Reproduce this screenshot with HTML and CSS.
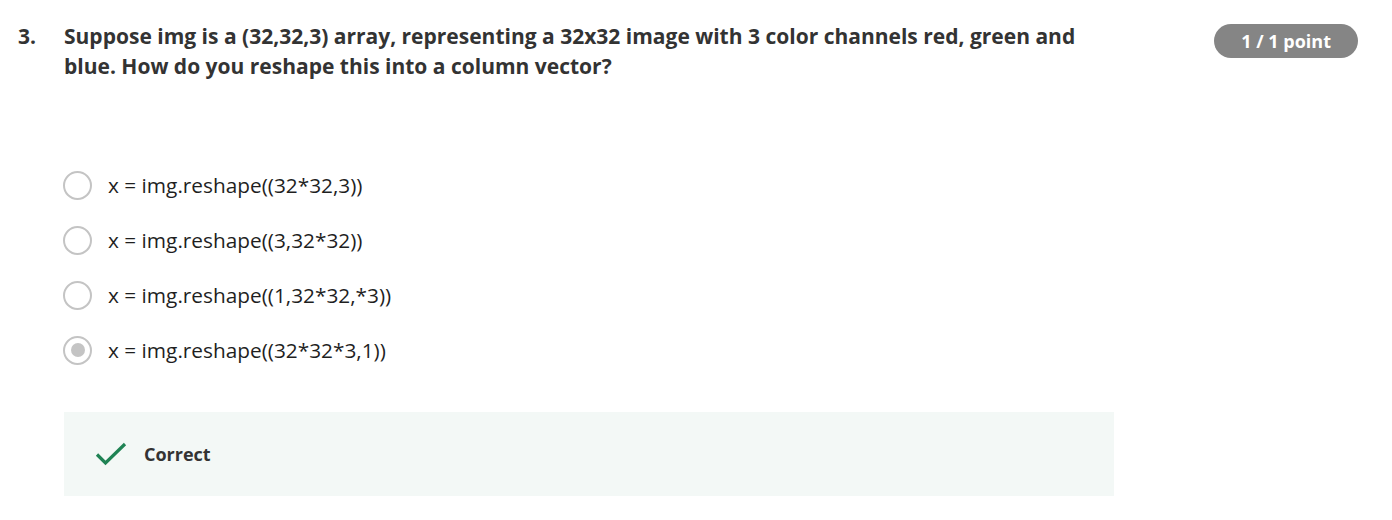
FILE: index.html
```html
<!DOCTYPE html>
<html lang="en">
<head>
<meta charset="utf-8">
<title>Quiz question</title>
<link rel="stylesheet" href="styles.css">
</head>
<body>
<div class="question">
  <div class="num">3.</div>
  <div class="content">
    <div class="prompt">Suppose img is a (32,32,3) array, representing a 32x32 image with 3 color channels red, green and blue. How do you reshape this into a column vector?</div>
    <div class="options">
      <div class="option"><span class="radio"></span><span class="label">x = img.reshape((32*32,3))</span></div>
      <div class="option"><span class="radio"></span><span class="label">x = img.reshape((3,32*32))</span></div>
      <div class="option"><span class="radio"></span><span class="label">x = img.reshape((1,32*32,*3))</span></div>
      <div class="option"><span class="radio checked"></span><span class="label">x = img.reshape((32*32*3,1))</span></div>
    </div>
    <div class="feedback">
      <svg class="check" width="32" height="24" viewBox="0 0 32 24"><path d="M2 12.5 L10.5 21 L30 2" fill="none" stroke="#1f8354" stroke-width="3.2"/></svg>
      <span class="fb-text">Correct</span>
    </div>
  </div>
  <div class="side"><span class="badge">1 / 1 point</span></div>
</div>
</body>
</html>
```

FILE: styles.css
```css
html, body {
  margin: 0;
  padding: 0;
  background: #ffffff;
}
body {
  font-family: "Open Sans", "Liberation Sans", sans-serif;
  color: #1f1f1f;
}
.question {
  display: flex;
  align-items: flex-start;
  padding: 21px 0 0 18px;
}
.num {
  width: 46px;
  flex: none;
  font-size: 21px;
  font-weight: 700;
  line-height: 30px;
  color: #333333;
}
.content {
  width: 1050px;
  flex: none;
}
.prompt {
  font-size: 21px;
  font-weight: 700;
  line-height: 30px;
  color: #333333;
}
.options {
  display: flex;
  flex-direction: column;
  gap: 27px;
  margin-top: 90px;
}
.option {
  display: flex;
  align-items: center;
  height: 28px;
}
.radio {
  width: 25px;
  height: 25px;
  border: 2px solid #c4c4c4;
  border-radius: 50%;
  flex: none;
  display: flex;
  align-items: center;
  justify-content: center;
  margin-left: -1px;
}
.radio.checked::after {
  content: "";
  width: 14px;
  height: 14px;
  border-radius: 50%;
  background: #c4c4c4;
}
.label {
  margin-left: 16px;
  font-size: 20.8px;
  color: #1f1f1f;
}
.feedback {
  margin-top: 48px;
  height: 84px;
  background: #f3f8f6;
  display: flex;
  align-items: center;
  padding-left: 31px;
}
.check {
  display: block;
}
.fb-text {
  margin-left: 17px;
  font-size: 18px;
  font-weight: 700;
  color: #333333;
}
.side {
  flex: 1;
  display: flex;
  justify-content: flex-end;
  padding-right: 34px;
}
.badge {
  display: inline-block;
  background: #858585;
  color: #ffffff;
  font-size: 18px;
  font-weight: 700;
  line-height: 34px;
  height: 34px;
  padding: 0 27px;
  border-radius: 17px;
  margin-top: 3px;
}
```
